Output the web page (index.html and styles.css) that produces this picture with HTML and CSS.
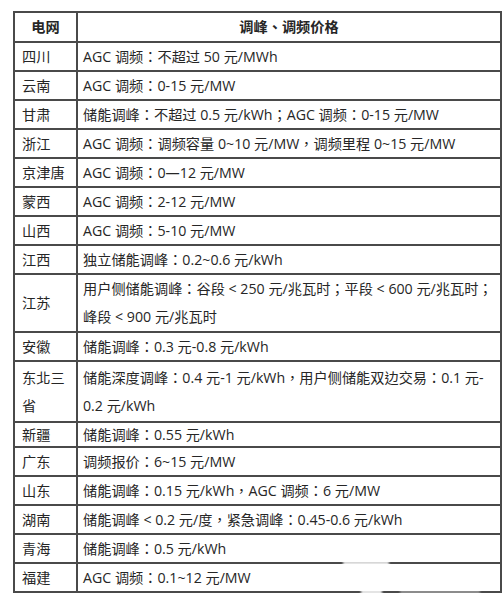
FILE: index.html
```html
<!DOCTYPE html>
<html lang="zh-TW">
<head>
<meta charset="utf-8">
<title>调峰、调频价格</title>
<link rel="stylesheet" href="styles.css">
</head>
<body>
<div class="page">
<table class="price-table">
<colgroup><col class="col-a"><col class="col-b"></colgroup>
<thead>
<tr class="row-head"><th>电网</th><th>调峰、调频价格</th></tr>
</thead>
<tbody>
<tr><td class="col-grid">四川</td><td>AGC 调频：不超过 50 元/MWh</td></tr>
<tr><td class="col-grid">云南</td><td>AGC 调频：0-15 元/MW</td></tr>
<tr><td class="col-grid">甘肃</td><td>储能调峰：不超过 0.5 元/kWh；AGC 调频：0-15 元/MW</td></tr>
<tr><td class="col-grid">浙江</td><td>AGC 调频：调频容量 0~10 元/MW，调频里程 0~15 元/MW</td></tr>
<tr><td class="col-grid">京津唐</td><td>AGC 调频：0—12 元/MW</td></tr>
<tr><td class="col-grid">蒙西</td><td>AGC 调频：2-12 元/MW</td></tr>
<tr><td class="col-grid">山西</td><td>AGC 调频：5-10 元/MW</td></tr>
<tr><td class="col-grid">江西</td><td>独立储能调峰：0.2~0.6 元/kWh</td></tr>
<tr class="row-double"><td class="col-grid">江苏</td><td>用户侧储能调峰：谷段 &lt; 250 元/兆瓦时；平段 &lt; 600 元/兆瓦时；<br>峰段 &lt; 900 元/兆瓦时</td></tr>
<tr><td class="col-grid">安徽</td><td>储能调峰：0.3 元-0.8 元/kWh</td></tr>
<tr class="row-double row-tall"><td class="col-grid">东北三<br>省</td><td>储能深度调峰：0.4 元-1 元/kWh，用户侧储能双边交易：0.1 元-<br>0.2 元/kWh</td></tr>
<tr class="row-short"><td class="col-grid">新疆</td><td>储能调峰：0.55 元/kWh</td></tr>
<tr><td class="col-grid">广东</td><td>调频报价：6~15 元/MW</td></tr>
<tr><td class="col-grid">山东</td><td>储能调峰：0.15 元/kWh，AGC 调频：6 元/MW</td></tr>
<tr><td class="col-grid">湖南</td><td>储能调峰 &lt; 0.2 元/度，紧急调峰：0.45-0.6 元/kWh</td></tr>
<tr><td class="col-grid">青海</td><td>储能调峰：0.5 元/kWh</td></tr>
<tr><td class="col-grid">福建</td><td>AGC 调频：0.1~12 元/MW</td></tr>
</tbody>
</table>
<div class="mark mark-a"></div>
<div class="mark mark-b"></div>
<div class="mark mark-c"></div>
</div>
</body>
</html>
```
FILE: styles.css
```css
html, body {
  margin: 0;
  padding: 0;
  background: #ffffff;
}

.page {
  position: relative;
  padding: 11px 0 0 13px;
  font-family: "Open Sans", "Noto Sans CJK TC", "Noto Sans CJK SC", sans-serif;
  color: #262626;
}

.price-table {
  border-collapse: collapse;
  table-layout: fixed;
  width: 489px;
  font-size: 14.2px;
  line-height: 20px;
}

.price-table .col-a {
  width: 63px;
}

.price-table th,
.price-table td {
  border: 2px solid #4a4a4a;
  padding: 0 5px;
  text-align: left;
  vertical-align: middle;
  white-space: nowrap;
  overflow: visible;
}

.price-table th {
  font-weight: 700;
  text-align: center;
}

.price-table .col-grid {
  padding-left: 7px;
}

.price-table tr {
  height: 29px;
}

.price-table .row-head {
  height: 30px;
}

.price-table .row-double {
  height: 58px;
}

.price-table .row-double td {
  line-height: 28px;
}

.price-table .row-tall {
  height: 61px;
}

.price-table .row-short {
  height: 25px;
}

.mark {
  position: absolute;
  background: #ffffff;
  opacity: 0.85;
  filter: blur(1px);
}

.mark-a {
  left: 343px;
  top: 561px;
  width: 46px;
  height: 5px;
}

.mark-b {
  left: 361px;
  top: 589px;
  width: 21px;
  height: 6px;
}

.mark-c {
  left: 400px;
  top: 590px;
  width: 80px;
  height: 4px;
  opacity: 0.4;
}
```
